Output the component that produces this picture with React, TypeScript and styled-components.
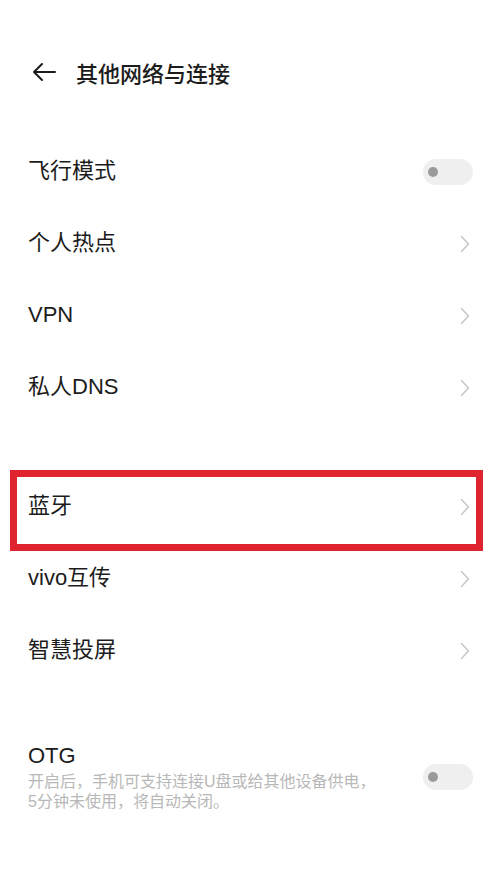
import styled, { createGlobalStyle } from 'styled-components';

const GlobalStyle = createGlobalStyle`
  html, body {
    margin: 0;
    padding: 0;
    background: #ffffff;
  }
  body {
    font-family: "Liberation Sans", "Noto Sans CJK SC", sans-serif;
    color: #1c1c1c;
  }
`

const Page = styled.div`
  width: 500px;
  min-height: 888px;
  background: #fff;
  display: flex;
  flex-direction: column;
`

const Header = styled.div`
  display: flex;
  align-items: center;
  height: 56px;
  margin-top: 44px;
  padding-left: 32px;
  gap: 20px;
`

const Title = styled.h1`
  margin: 0;
  font-size: 22px;
  font-weight: 500;
  color: #1c1c1c;
`

const Group = styled.div<{ $top: number }>`
  display: flex;
  flex-direction: column;
  margin-top: ${(p) => p.$top}px;
`

const Row = styled.div<{ $marked?: boolean }>`
  position: relative;
  height: 72px;
  display: flex;
  align-items: center;
  justify-content: space-between;
  padding: 0 28px;

  ${(p) =>
    p.$marked &&
    `
    &::after {
      content: '';
      position: absolute;
      left: 10px;
      right: 17px;
      top: -1px;
      bottom: -8px;
      border: 7px solid #e0242f;
      pointer-events: none;
    }
  `}
`

const Label = styled.span`
  font-size: 22px;
  line-height: 28px;
  margin-top: -3px;
  color: #1c1c1c;
`

const Chevron = styled.svg`
  width: 10px;
  height: 18px;
  margin-right: 2px;
`

const Toggle = styled.div`
  width: 50px;
  height: 26px;
  border-radius: 13px;
  background: #efefef;
  display: flex;
  align-items: center;
  padding-left: 5px;
  box-sizing: border-box;
  flex-shrink: 0;
  margin-right: -1px;
`

const Knob = styled.div`
  width: 10px;
  height: 10px;
  border-radius: 50%;
  background: #9a9a9a;
`

const OtgRow = styled.div`
  display: flex;
  align-items: center;
  justify-content: space-between;
  padding: 0 28px;
  margin-top: 55px;
`

const OtgText = styled.div`
  display: flex;
  flex-direction: column;
`

const OtgTitle = styled.span`
  font-size: 22px;
  line-height: 28px;
  color: #1c1c1c;
`

const Hint = styled.p`
  margin: 2px 0 0;
  font-size: 16px;
  line-height: 20px;
  color: #b8b8b8;
`

const Arrow = () => (
  <svg width="24" height="20" viewBox="0 0 24 20" fill="none">
    <path d="M23 10H2M10 2L2 10L10 18" stroke="#1c1c1c" strokeWidth="2" strokeLinecap="round" strokeLinejoin="round" />
  </svg>
)

const Arrowhead = () => (
  <Chevron viewBox="0 0 10 18" fill="none">
    <path d="M1.5 1.5L8.5 9L1.5 16.5" stroke="#c6c6c6" strokeWidth="1.5" strokeLinecap="round" strokeLinejoin="round" />
  </Chevron>
)

const Switch = () => (
  <Toggle>
    <Knob />
  </Toggle>
)

export default function App() {
  return (
    <Page>
      <GlobalStyle />
      <Header>
        <Arrow />
        <Title>其他网络与连接</Title>
      </Header>

      <Group $top={36}>
        <Row>
          <Label>飞行模式</Label>
          <Switch />
        </Row>
        <Row>
          <Label>个人热点</Label>
          <Arrowhead />
        </Row>
        <Row>
          <Label>VPN</Label>
          <Arrowhead />
        </Row>
        <Row>
          <Label>私人DNS</Label>
          <Arrowhead />
        </Row>
      </Group>

      <Group $top={47}>
        <Row $marked>
          <Label>蓝牙</Label>
          <Arrowhead />
        </Row>
        <Row>
          <Label>vivo互传</Label>
          <Arrowhead />
        </Row>
        <Row>
          <Label>智慧投屏</Label>
          <Arrowhead />
        </Row>
      </Group>

      <OtgRow>
        <OtgText>
          <OtgTitle>OTG</OtgTitle>
          <Hint>
            开启后，手机可支持连接U盘或给其他设备供电，
            <br />
            5分钟未使用，将自动关闭。
          </Hint>
        </OtgText>
        <Switch />
      </OtgRow>
    </Page>
  )
}
